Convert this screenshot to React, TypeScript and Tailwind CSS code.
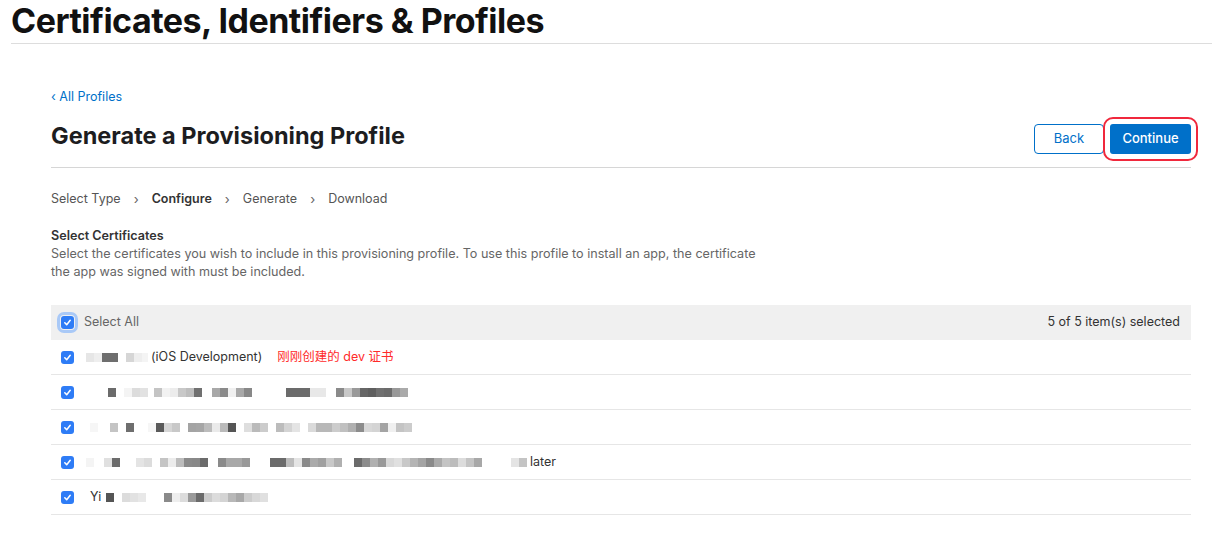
import React from 'react';

type Block = [number, string] | number;

const rowMosaics: { lead?: string; blocks: Block[]; tail?: string; note?: string; pad: number }[] = [
  {
    pad: 86,
    blocks: [[8, '#e6e6e6'], [8, '#eeeeee'], [0, ''], [16, '#6e6e6e'], 8, [8, '#d6d6d6'], [8, '#eeeeee'], [6, '#f4f4f4']],
    tail: '(iOS Development)',
    note: '刚刚创建的 dev 证书',
  },
  {
    pad: 108,
    blocks: [[8, '#6b6b6b'], 8, [8, '#f4f4f4'], [8, '#dcdcdc'], [8, '#e2e2e2'], 6, [8, '#c4c4c4'], [8, '#f2f2f2'], [8, '#ececec'], [8, '#c8c8c8'], [8, '#bdbdbd'], [8, '#707070'], 10, [8, '#a8a8a8'], [8, '#8a8a8a'], [8, '#f0f0f0'], [8, '#a8a8a8'], [8, '#888888'], 34, [24, '#6b6b6b'], [16, '#e8e8e8'], 10, [8, '#8a8a8a'], [8, '#c8c8c8'], [8, '#999999'], [8, '#666666'], [8, '#5f5f5f'], [8, '#707070'], [8, '#6b6b6b'], [8, '#999999'], [8, '#aaaaaa']],
  },
  {
    pad: 90,
    blocks: [[8, '#f6f6f6'], 12, [8, '#c4c4c4'], 8, [8, '#6e6e6e'], 14, [8, '#f6f6f6'], [8, '#5a5a5a'], [8, '#d6d6d6'], [8, '#c8c8c8'], 8, [8, '#a4a4a4'], [8, '#a6a6a6'], [8, '#bcbcbc'], [8, '#eaeaea'], [8, '#bababa'], [8, '#555555'], 8, [8, '#dedede'], [8, '#bababa'], [8, '#cccccc'], 8, [8, '#bcbcbc'], [8, '#d4d4d4'], [8, '#e4e4e4'], 8, [8, '#dadada'], [8, '#b8b8b8'], [8, '#b8b8b8'], [8, '#cccccc'], [8, '#c0c0c0'], [8, '#b0b0b0'], [8, '#8c8c8c'], [8, '#d8d8d8'], [8, '#d4d4d4'], [8, '#a4a4a4'], [8, '#f0f0f0'], [8, '#c4c4c4'], [8, '#cccccc']],
  },
  {
    pad: 86,
    blocks: [[8, '#f4f4f4'], 10, [8, '#e0e0e0'], [8, '#6b6b6b'], 16, [8, '#e4e4e4'], [8, '#dcdcdc'], 8, [8, '#c4c4c4'], [8, '#ececec'], [8, '#bcbcbc'], [8, '#8a8a8a'], [8, '#888888'], [8, '#6b6b6b'], 10, [8, '#8a8a8a'], [8, '#a8a8a8'], [8, '#a8a8a8'], [8, '#999999'], 20, [16, '#6b6b6b'], [8, '#bcbcbc'], [8, '#e4e4e4'], [8, '#8a8a8a'], [8, '#aaaaaa'], [8, '#a0a0a0'], [8, '#c8c8c8'], [8, '#b0b0b0'], 12, [8, '#6b6b6b'], [8, '#8c8c8c'], [8, '#b0b0b0'], [8, '#999999'], [8, '#d8d8d8'], [8, '#e0e0e0'], [8, '#c8c8c8'], [8, '#b4b4b4'], [8, '#a4a4a4'], [8, '#8a8a8a'], [8, '#aaaaaa'], [8, '#c4c4c4'], [8, '#bcbcbc'], [8, '#dcdcdc'], [8, '#c4c4c4'], [8, '#a8a8a8'], 29, [8, '#e4e4e4'], [8, '#c4c4c4']],
    tail: 'later',
  },
  {
    pad: 90,
    lead: 'Yi',
    blocks: [5, [8, '#555555'], 8, [8, '#dcdcdc'], [8, '#e2e2e2'], [8, '#e8e8e8'], 18, [8, '#8a8a8a'], [8, '#eeeeee'], [8, '#dcdcdc'], [8, '#9a9a9a'], [8, '#6b6b6b'], [8, '#cccccc'], [8, '#dcdcdc'], [8, '#d4d4d4'], [8, '#b8b8b8'], [8, '#a8a8a8'], [8, '#cccccc'], [8, '#d8d8d8'], [8, '#e0e0e0']],
  },
];

const Check = ({ focus }: { focus?: boolean }) => (
  <span
    className={`flex h-[13px] w-[13px] shrink-0 items-center justify-center rounded-[3px] bg-[#2e7cf6] ${
      focus ? 'outline-[3px] outline-[#a9c9f7] outline-offset-[1px] outline' : ''
    }`}
  >
    <svg width="9" height="9" viewBox="0 0 10 10" fill="none">
      <path d="M2 5.3 L4.1 7.4 L8 2.6" stroke="white" strokeWidth="1.7" strokeLinecap="round" strokeLinejoin="round" />
    </svg>
  </span>
);

const Mosaic = ({ blocks }: { blocks: Block[] }) => (
  <span className="flex items-center">
    {blocks.map((b, i) =>
      typeof b === 'number' ? (
        <span key={i} style={{ width: b }} className="h-[9px]" />
      ) : b[0] === 0 ? null : (
        <span key={i} style={{ width: b[0], background: b[1] }} className="h-[9px]" />
      )
    )}
  </span>
);

export default function App() {
  return (
    <div className="h-[538px] w-[1212px] overflow-hidden bg-white text-[#333333]" style={{ fontFamily: 'Inter, "Noto Sans CJK SC", sans-serif' }}>
      <div className="pl-[11px]">
        <h1 className="border-b border-[#dddddd] pb-[1px] text-[34px] font-bold leading-[42px] tracking-[-0.5px] text-[#111111]">
          Certificates, Identifiers &amp; Profiles
        </h1>
      </div>

      <div className="pl-[51px] pr-[21px]">
        <a className="mt-[45px] block text-[12.5px] leading-[16px] text-[#0070c9]">‹ All Profiles</a>

        <div className="mt-[7px] flex items-start justify-between border-b border-[#d6d6d6] pb-[13px]">
          <h2 className="pt-[9px] text-[23.5px] font-bold leading-[30px] text-[#1d1d1f]">Generate a Provisioning Profile</h2>
          <div className="flex items-center gap-[6px] pt-[12px]">
            <button className="h-[30px] w-[70px] rounded-[4px] border border-[#0070c9] text-[13px] text-[#0070c9]">Back</button>
            <button className="h-[30px] w-[81px] rounded-[3px] bg-[#0070c9] text-[13px] font-medium text-white outline outline-2 outline-offset-[5px] outline-[#f0283c]">
              Continue
            </button>
          </div>
        </div>

        <div className="mt-[22px] flex items-center text-[12.5px] leading-[18px] text-[#555555]">
          <span>Select Type</span>
          <span className="mx-[13px] text-[13px] text-[#666]">›</span>
          <span className="font-semibold text-[#333333]">Configure</span>
          <span className="mx-[13px] text-[13px] text-[#666]">›</span>
          <span>Generate</span>
          <span className="mx-[13px] text-[13px] text-[#666]">›</span>
          <span>Download</span>
        </div>

        <div className="mt-[19px] text-[12.6px] leading-[18px]">
          <div className="font-semibold text-[#333333]">Select Certificates</div>
          <p className="w-[720px] text-[#666666]">
            Select the certificates you wish to include in this provisioning profile. To use this profile to install an app, the certificate the app was signed with must be included.
          </p>
        </div>

        <div className="mt-[24px] text-[12.5px]">
          <div className="flex h-[35px] items-center justify-between bg-[#f0f0f0] pl-[10px] pr-[11px]">
            <div className="flex items-center gap-[10px]">
              <Check focus />
              <span className="text-[#666666]">Select All</span>
            </div>
            <span className="text-[#333333]">5 of 5 item(s) selected</span>
          </div>
          {rowMosaics.map((r, i) => (
            <div key={i} className="flex h-[35px] items-center border-b border-[#e6e6e6] pl-[10px]">
              <Check />
              <div className="flex items-center" style={{ paddingLeft: r.pad - 74 }}>
                {r.lead && <span className="text-[#333333]">{r.lead}</span>}
                <Mosaic blocks={r.blocks} />
                {r.tail && <span className="ml-[3px] text-[#333333]">{r.tail}</span>}
                {r.note && <span className="ml-[15px] text-[#ff2a2a]">{r.note}</span>}
              </div>
            </div>
          ))}
        </div>
      </div>
    </div>
  );
}
